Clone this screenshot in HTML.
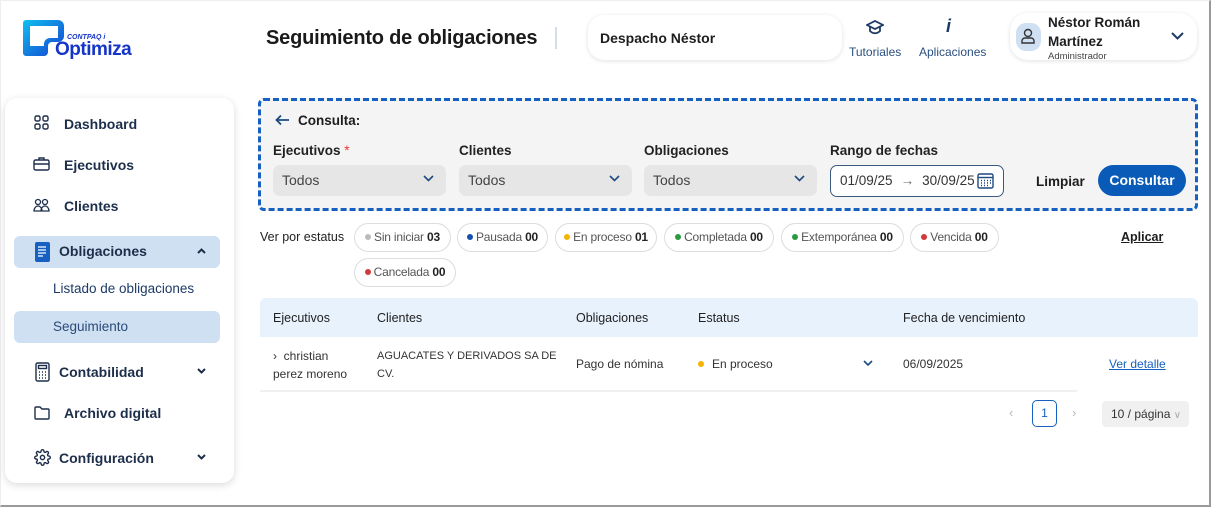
<!DOCTYPE html>
<html><head><meta charset="utf-8"><style>
*{box-sizing:border-box;margin:0;padding:0}
body{width:1215px;height:510px;background:#fff;font-family:"Liberation Sans",sans-serif;color:#1d1d1f;position:relative;overflow:hidden}
.frame{position:absolute;left:0;top:0;width:1211px;height:507px;border-right:2px solid #9a9a9a;border-bottom:2px solid #9a9a9a;border-top:1px solid #eee;border-left:1px solid #eee}
.abs{position:absolute}
.b{font-weight:bold}
.side{left:5px;top:98px;width:229px;height:385px;background:#fff;border-radius:12px;box-shadow:0 2px 8px rgba(0,0,0,.15)}
.nav{position:absolute;left:0;font-size:14px;font-weight:bold;color:#1d2e4a}
.sel{background:#cfe0f2;border-radius:6px}
.chip{position:absolute;height:29px;border:1px solid #ddd;border-radius:15px;font-size:12px;color:#555;line-height:27px;background:#fff;white-space:nowrap;text-align:center;letter-spacing:-.2px}
.chip b{color:#222}
.dot{display:inline-block;width:6px;height:6px;border-radius:3px;margin-right:3px;vertical-align:1px}
.lbl{position:absolute;font-size:13.5px;font-weight:bold;color:#222}
.selbox{position:absolute;height:31px;width:173px;background:#e6e6e6;border-radius:7px;font-size:14px;color:#444;padding-left:9px;line-height:31px}
.chev{position:absolute;right:12px;top:10px}
.th{position:absolute;font-size:12.5px;color:#222;top:311px}
.td{position:absolute;font-size:12px;color:#333}
</style></head><body>
<div class="frame"></div>
<!-- logo -->
<svg class="abs" style="left:22px;top:18px" width="46" height="40" viewBox="0 0 46 40"><defs><linearGradient id="g" x1="0" y1="0" x2="1" y2="1"><stop offset="0" stop-color="#10c0f0"/><stop offset="1" stop-color="#1440d0"/></linearGradient></defs><path d="M4 2h32a6 6 0 0 1 6 6v10a6 6 0 0 1-6 6H30a4 4 0 0 0-4 4v6a4 4 0 0 1-4 4H4a3 3 0 0 1-3-3V5a3 3 0 0 1 3-3z M8 8v20h14v-2a6 6 0 0 1 6-6h8V8z" fill="url(#g)" fill-rule="evenodd"/></svg>
<div class="abs b" style="left:67px;top:34px;font-size:7px;color:#1535c8;font-style:italic">CONTPAQ i</div>
<div class="abs b" style="left:55px;top:39px;font-size:19px;color:#1535c8;letter-spacing:-.5px">Optimiza</div>
<!-- header -->
<div class="abs b" style="left:266px;top:27px;font-size:20px;color:#1a1a1a;letter-spacing:-.2px">Seguimiento de obligaciones</div>
<div class="abs" style="left:555px;top:27px;width:2px;height:22px;background:#d5dde8"></div>
<div class="abs" style="left:588px;top:15px;width:254px;height:45px;border-radius:16px;box-shadow:0 1px 5px rgba(0,0,0,.12);font-size:14px;font-weight:bold;padding:15px 12px">Despacho Néstor</div>
<svg class="abs" style="left:866px;top:20px" width="18" height="16" viewBox="0 0 18 16" fill="none" stroke="#1d3a66" stroke-width="1.8"><path d="M1 5l8-4 8 4-8 4z M4 7v4c3 3 7 3 10 0V7"/></svg>
<div class="abs" style="left:849px;top:45px;font-size:12px;color:#2a5080">Tutoriales</div>
<div class="abs b" style="left:946px;top:16px;font-size:18px;font-style:italic;color:#1d3a66">i</div>
<div class="abs" style="left:919px;top:45px;font-size:12px;color:#2a5080">Aplicaciones</div>
<div class="abs" style="left:1010px;top:13px;width:187px;height:47px;border-radius:18px;box-shadow:0 1px 5px rgba(0,0,0,.12)"></div>
<div class="abs" style="left:1016px;top:23px;width:25px;height:28px;border-radius:10px;background:#cfe0f2"></div>
<svg class="abs" style="left:1020px;top:28px" width="16" height="17" viewBox="0 0 16 17" fill="none" stroke="#333" stroke-width="1.4"><circle cx="8" cy="5" r="3.5"/><path d="M2 15v-2a3 3 0 0 1 3-3h6a3 3 0 0 1 3 3v2z"/></svg>
<div class="abs b" style="left:1048px;top:13px;font-size:13.5px;line-height:19px">Néstor Román<br>Martínez</div>
<div class="abs" style="left:1048px;top:51px;font-size:9.5px;color:#444">Administrador</div>
<svg class="abs" style="left:1171px;top:32px" width="13" height="8" viewBox="0 0 13 8" fill="none" stroke="#1d3a66" stroke-width="2"><path d="M1 1l5.5 5.5L12 1"/></svg>
<!-- sidebar -->
<div class="abs side">
<svg class="abs" style="left:29px;top:17px" width="15" height="15" viewBox="0 0 15 15" fill="none" stroke="#1d2e4a" stroke-width="1.4"><rect x="1" y="1" width="5" height="5" rx="1.5"/><rect x="9" y="1" width="5" height="5" rx="1.5"/><rect x="1" y="9" width="5" height="5" rx="1.5"/><rect x="9" y="9" width="5" height="5" rx="1.5"/></svg>
<div class="nav" style="left:59px;top:18px">Dashboard</div>
<svg class="abs" style="left:28px;top:59px" width="17" height="14" viewBox="0 0 17 14" fill="none" stroke="#1d2e4a" stroke-width="1.4"><rect x="1" y="3" width="15" height="10" rx="1.5"/><path d="M6 3V1h5v2M1 7h15"/></svg>
<div class="nav" style="left:59px;top:59px">Ejecutivos</div>
<svg class="abs" style="left:28px;top:100px" width="17" height="14" viewBox="0 0 17 14" fill="none" stroke="#1d2e4a" stroke-width="1.3"><circle cx="5" cy="4" r="2.5"/><circle cx="12" cy="4" r="2.5"/><path d="M1 13c0-3 2-5 4-5s4 2 4 5zM8 13c0-3 2-5 4-5s4 2 4 5z"/></svg>
<div class="nav" style="left:59px;top:100px">Clientes</div>
<div class="abs sel" style="left:9px;top:138px;width:206px;height:32px"></div>
<svg class="abs" style="left:30px;top:144px" width="15" height="20" viewBox="0 0 15 20"><rect x="0" y="0" width="15" height="20" rx="2" fill="#1560c0"/><path d="M3 5h8M3 8h8M3 11h8M3 14h5" stroke="#fff" stroke-width="1.2"/></svg>
<div class="nav" style="left:54px;top:145px">Obligaciones</div>
<svg class="abs" style="left:192px;top:150px" width="9" height="6" viewBox="0 0 9 6"><path d="M1 5l3.5-3.5L8 5" fill="none" stroke="#1d2e4a" stroke-width="2"/></svg>
<div class="abs" style="left:48px;top:183px;font-size:13.5px;color:#1d3a66">Listado de obligaciones</div>
<div class="abs sel" style="left:9px;top:213px;width:206px;height:32px"></div>
<div class="abs" style="left:48px;top:221px;font-size:13.5px;color:#2a4a78">Seguimiento</div>
<svg class="abs" style="left:30px;top:264px" width="15" height="20" viewBox="0 0 15 20" fill="none" stroke="#1d2e4a" stroke-width="1.4"><rect x="1" y="1" width="13" height="18" rx="1.5"/><rect x="3.5" y="3.5" width="8" height="3"/><path d="M4 10h1M7 10h1M10 10h1M4 13h1M7 13h1M10 13h1M4 16h1M7 16h1M10 16h1"/></svg>
<div class="nav" style="left:54px;top:266px">Contabilidad</div>
<svg class="abs" style="left:192px;top:270px" width="9" height="6" viewBox="0 0 9 6"><path d="M1 1l3.5 3.5L8 1" fill="none" stroke="#1d2e4a" stroke-width="2"/></svg>
<svg class="abs" style="left:29px;top:308px" width="16" height="14" viewBox="0 0 16 14" fill="none" stroke="#1d2e4a" stroke-width="1.4"><path d="M1 2a1 1 0 0 1 1-1h4l2 2h6a1 1 0 0 1 1 1v8a1 1 0 0 1-1 1H2a1 1 0 0 1-1-1z"/></svg>
<div class="nav" style="left:59px;top:307px">Archivo digital</div>
<svg class="abs" style="left:29px;top:351px" width="17" height="17" viewBox="0 0 24 24" fill="none" stroke="#1d2e4a" stroke-width="2"><circle cx="12" cy="12" r="3"/><path d="M19.4 15a1.7 1.7 0 0 0 .3 1.8l.1.1a2 2 0 1 1-2.8 2.8l-.1-.1a1.7 1.7 0 0 0-1.8-.3 1.7 1.7 0 0 0-1 1.5V21a2 2 0 1 1-4 0v-.1a1.7 1.7 0 0 0-1.1-1.5 1.7 1.7 0 0 0-1.8.3l-.1.1a2 2 0 1 1-2.8-2.8l.1-.1a1.7 1.7 0 0 0 .3-1.8 1.7 1.7 0 0 0-1.5-1H3a2 2 0 1 1 0-4h.1a1.7 1.7 0 0 0 1.5-1.1 1.7 1.7 0 0 0-.3-1.8l-.1-.1a2 2 0 1 1 2.8-2.8l.1.1a1.7 1.7 0 0 0 1.8.3H9a1.7 1.7 0 0 0 1-1.5V3a2 2 0 1 1 4 0v.1a1.7 1.7 0 0 0 1 1.5 1.7 1.7 0 0 0 1.8-.3l.1-.1a2 2 0 1 1 2.8 2.8l-.1.1a1.7 1.7 0 0 0-.3 1.8V9a1.7 1.7 0 0 0 1.5 1H21a2 2 0 1 1 0 4h-.1a1.7 1.7 0 0 0-1.5 1z"/></svg>
<div class="nav" style="left:54px;top:352px">Configuración</div>
<svg class="abs" style="left:192px;top:356px" width="9" height="6" viewBox="0 0 9 6"><path d="M1 1l3.5 3.5L8 1" fill="none" stroke="#1d2e4a" stroke-width="2"/></svg>
</div>
<!-- filter panel -->
<div class="abs" style="left:258px;top:98px;width:940px;height:113px;background:#f4f4f4;border:3px dashed #1560c0;border-radius:6px"></div>
<svg class="abs" style="left:275px;top:114px" width="15" height="12" viewBox="0 0 15 12" fill="none" stroke="#1d4a80" stroke-width="1.8"><path d="M14 6H2M6 1.5L1.5 6 6 10.5"/></svg>
<div class="abs b" style="left:298px;top:113px;font-size:13.5px">Consulta:</div>
<div class="lbl" style="left:273px;top:143px">Ejecutivos<span style="color:#e33;font-weight:normal"> *</span></div>
<div class="lbl" style="left:459px;top:143px">Clientes</div>
<div class="lbl" style="left:644px;top:143px">Obligaciones</div>
<div class="lbl" style="left:830px;top:143px">Rango de fechas</div>
<div class="selbox" style="left:273px;top:165px">Todos<svg class="chev" width="11" height="7" viewBox="0 0 11 7"><path d="M1 1l4.5 4.5L10 1" fill="none" stroke="#1d4a80" stroke-width="1.6"/></svg></div>
<div class="selbox" style="left:459px;top:165px">Todos<svg class="chev" width="11" height="7" viewBox="0 0 11 7"><path d="M1 1l4.5 4.5L10 1" fill="none" stroke="#1d4a80" stroke-width="1.6"/></svg></div>
<div class="selbox" style="left:644px;top:165px">Todos<svg class="chev" width="11" height="7" viewBox="0 0 11 7"><path d="M1 1l4.5 4.5L10 1" fill="none" stroke="#1d4a80" stroke-width="1.6"/></svg></div>
<div class="abs" style="left:830px;top:165px;width:174px;height:32px;border:1.5px solid #3a5a80;border-radius:7px;background:#fff;font-size:13.5px;color:#333;line-height:29px;padding-left:9px;white-space:nowrap;overflow:hidden">01/09/25<span style="color:#666;margin:0 8px">→</span>30/09/25</div>
<svg class="abs" style="left:977px;top:172px" width="17" height="17" viewBox="0 0 17 17" fill="none" stroke="#1d4a80" stroke-width="1.4"><rect x="1" y="2" width="15" height="14" rx="1.5"/><path d="M1 5.5h15"/><path d="M4 8.5h1M7 8.5h1M10 8.5h1M13 8.5h1M4 11h1M7 11h1M10 11h1M13 11h1M4 13.5h1M7 13.5h1M10 13.5h1" stroke-width="1.6"/></svg>
<div class="abs b" style="left:1036px;top:174px;font-size:13.5px">Limpiar</div>
<div class="abs b" style="left:1098px;top:165px;width:88px;height:31px;border-radius:16px;background:#0a5bb8;color:#fff;font-size:14px;text-align:center;line-height:31px">Consultar</div>
<!-- status chips -->
<div class="abs" style="left:260px;top:230px;font-size:12.5px;color:#222">Ver por estatus</div>
<div class="chip" style="left:354px;top:223px;width:97px"><span class="dot" style="background:#bbb"></span>Sin iniciar <b>03</b></div>
<div class="chip" style="left:457px;top:223px;width:91px"><span class="dot" style="background:#1550b0"></span>Pausada <b>00</b></div>
<div class="chip" style="left:555px;top:223px;width:102px"><span class="dot" style="background:#f5b400"></span>En proceso <b>01</b></div>
<div class="chip" style="left:664px;top:223px;width:110px"><span class="dot" style="background:#2a9a40"></span>Completada <b>00</b></div>
<div class="chip" style="left:781px;top:223px;width:123px"><span class="dot" style="background:#2a9a40"></span>Extemporánea <b>00</b></div>
<div class="chip" style="left:910px;top:223px;width:89px"><span class="dot" style="background:#d03a3a"></span>Vencida <b>00</b></div>
<div class="chip" style="left:354px;top:258px;width:102px"><span class="dot" style="background:#d03a3a"></span>Cancelada <b>00</b></div>
<div class="abs b" style="left:1121px;top:230px;font-size:12.5px;text-decoration:underline">Aplicar</div>
<!-- table -->
<div class="abs" style="left:260px;top:298px;width:938px;height:39px;background:#e8f2fd;border-radius:6px 6px 0 0"></div>
<div class="th" style="left:273px">Ejecutivos</div>
<div class="th" style="left:377px">Clientes</div>
<div class="th" style="left:576px">Obligaciones</div>
<div class="th" style="left:698px">Estatus</div>
<div class="th" style="left:903px">Fecha de vencimiento</div>
<div class="td" style="left:273px;top:347px;line-height:18px">›&nbsp; christian<br>perez moreno</div>
<div class="td" style="left:377px;top:347px;line-height:18px;font-size:11px">AGUACATES Y DERIVADOS SA DE<br>CV.</div>
<div class="td" style="left:576px;top:357px">Pago de nómina</div>
<div class="td" style="left:698px;top:357px"><span class="dot" style="background:#f5b400;margin-right:8px"></span>En proceso</div>
<svg class="abs" style="left:863px;top:360px" width="10" height="6" viewBox="0 0 10 6"><path d="M1 1l4 4 4-4" fill="none" stroke="#1d4a80" stroke-width="1.6"/></svg>
<div class="td" style="left:903px;top:357px">06/09/2025</div>
<div class="td" style="left:1109px;top:357px;color:#1560c0;text-decoration:underline">Ver detalle</div>
<div class="abs" style="left:260px;top:390px;width:817px;height:2px;background:#eef0f2"></div>
<div class="abs" style="left:1009px;top:405px;font-size:13px;color:#bbb">‹</div>
<div class="abs" style="left:1032px;top:400px;width:25px;height:27px;border:1.5px solid #1560c0;border-radius:5px;font-size:12px;text-align:center;line-height:24px;color:#1560c0">1</div>
<div class="abs" style="left:1072px;top:405px;font-size:13px;color:#bbb">›</div>
<div class="abs" style="left:1102px;top:401px;width:87px;height:26px;background:#f0f0f0;border-radius:4px;font-size:12px;color:#333;line-height:26px;padding-left:9px">10 / página <span style="color:#aaa;font-size:10px">∨</span></div>
</body></html>
